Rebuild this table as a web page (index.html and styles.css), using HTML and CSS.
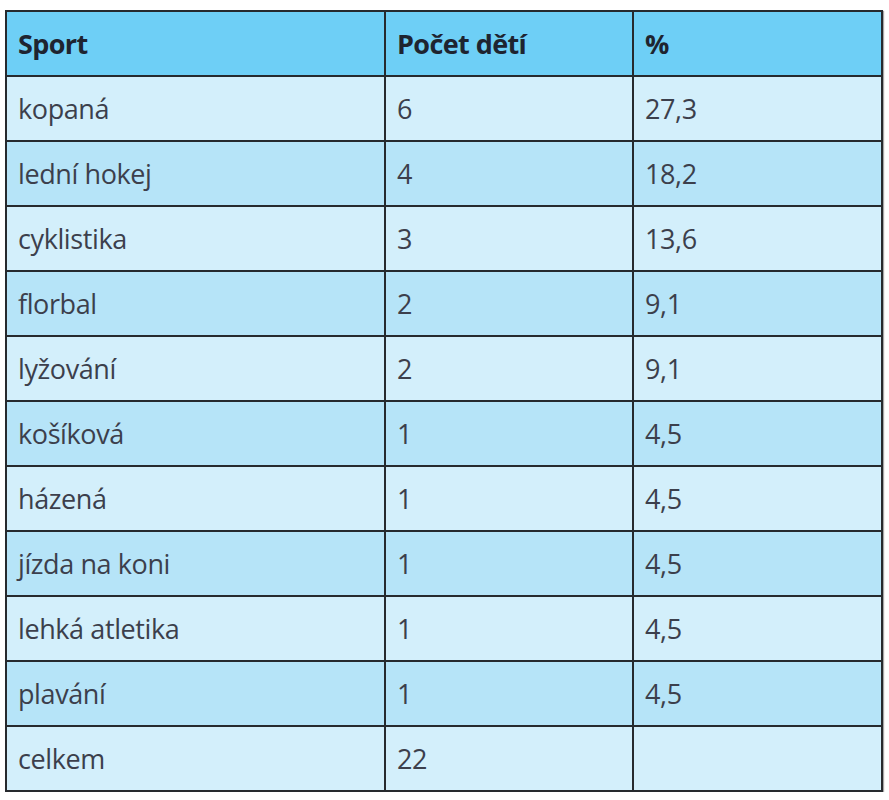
FILE: index.html
```html
<!DOCTYPE html>
<html lang="cs">
<head>
<meta charset="utf-8">
<title>Sport</title>
<link rel="stylesheet" href="styles.css">
</head>
<body>
<table class="sport-table">
  <colgroup>
    <col class="c1"><col class="c2"><col class="c3">
  </colgroup>
  <thead>
    <tr class="head"><th>Sport</th><th>Počet dětí</th><th>%</th></tr>
  </thead>
  <tbody>
    <tr class="light"><td>kopaná</td><td>6</td><td>27,3</td></tr>
    <tr class="dark"><td>lední hokej</td><td>4</td><td>18,2</td></tr>
    <tr class="light"><td>cyklistika</td><td>3</td><td>13,6</td></tr>
    <tr class="dark"><td>florbal</td><td>2</td><td>9,1</td></tr>
    <tr class="light"><td>lyžování</td><td>2</td><td>9,1</td></tr>
    <tr class="dark"><td>košíková</td><td>1</td><td>4,5</td></tr>
    <tr class="light"><td>házená</td><td>1</td><td>4,5</td></tr>
    <tr class="dark"><td>jízda na koni</td><td>1</td><td>4,5</td></tr>
    <tr class="light"><td>lehká atletika</td><td>1</td><td>4,5</td></tr>
    <tr class="dark"><td>plavání</td><td>1</td><td>4,5</td></tr>
    <tr class="light"><td>celkem</td><td>22</td><td></td></tr>
  </tbody>
</table>
</body>
</html>
```

FILE: styles.css
```css
html, body {
  margin: 0;
  padding: 0;
  background: #ffffff;
}
body {
  padding: 10px 0 0 5px;
  font-family: "Open Sans", "Liberation Sans", sans-serif;
}
.sport-table {
  border-collapse: collapse;
  width: 876px;
  table-layout: fixed;
  box-shadow: 1px 1px 1px rgba(0,0,0,0.35);
}
.c1 { width: 379px; }
.c2 { width: 248px; }
.c3 { width: 249px; }
.sport-table th,
.sport-table td {
  border: 2px solid #262a2e;
  height: 63px;
  padding: 0 0 0 11px;
  text-align: left;
  vertical-align: middle;
  font-size: 27px;
  color: #3c3f4c;
  font-weight: 400;
  letter-spacing: -0.4px;
}
.sport-table th {
  font-weight: 700;
  color: #1e2430;
  letter-spacing: -0.6px;
}
.head { background: #6ecff6; }
.light { background: #d3effb; }
.dark { background: #b6e4f8; }
```
